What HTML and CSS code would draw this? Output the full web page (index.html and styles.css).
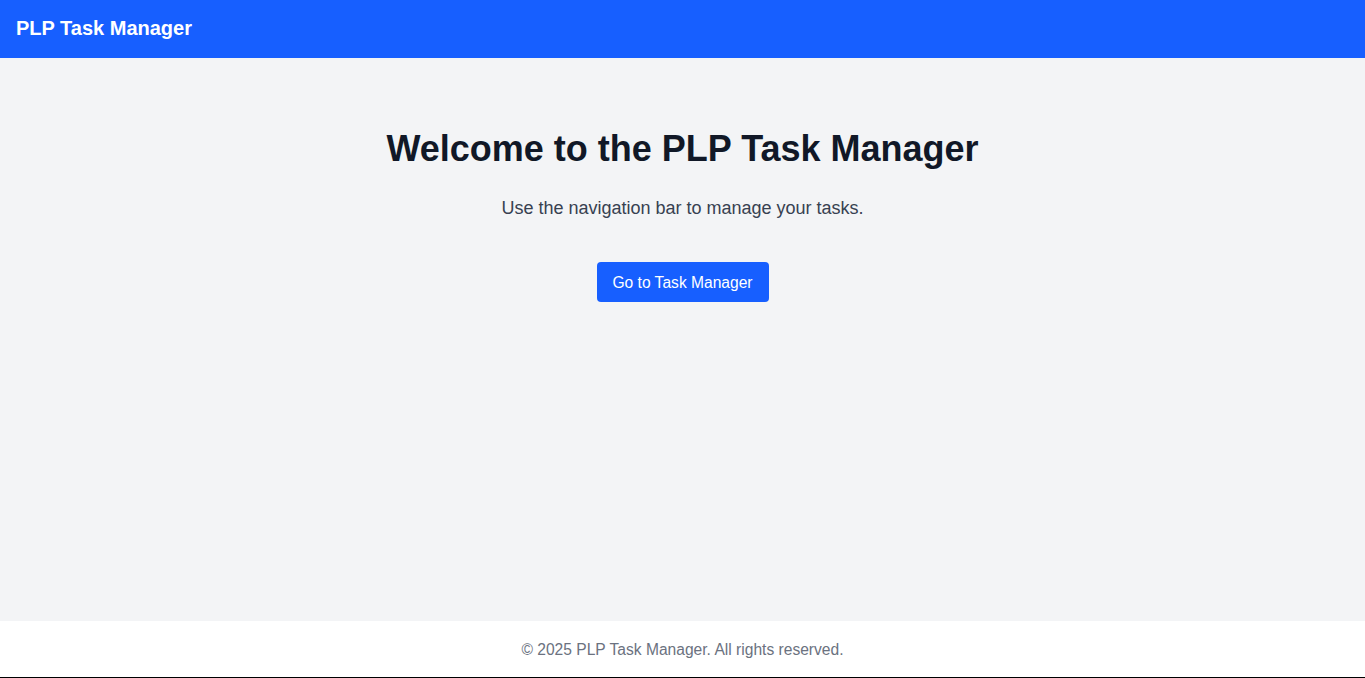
FILE: index.html
```html
<!DOCTYPE html>
<html lang="en">
<head>
<meta charset="utf-8">
<title>PLP Task Manager</title>
<link rel="stylesheet" href="styles.css">
</head>
<body>
<div class="page">
  <header class="navbar">
    <span class="brand">PLP Task Manager</span>
  </header>
  <main class="main">
    <h1 class="title">Welcome to the PLP Task Manager</h1>
    <p class="lead">Use the navigation bar to manage your tasks.</p>
    <button class="btn">Go to Task Manager</button>
  </main>
  <footer class="footer">© 2025 PLP Task Manager. All rights reserved.</footer>
</div>
</body>
</html>
```
FILE: styles.css
```css
html, body {
  margin: 0;
  padding: 0;
  height: 100%;
}
body {
  font-family: "Liberation Sans", Arial, sans-serif;
  background: #f3f4f6;
}
.page {
  display: flex;
  flex-direction: column;
  height: 678px;
}
.navbar {
  height: 58px;
  background: #175fff;
  display: flex;
  align-items: center;
  padding: 0 16px 2px;
  box-sizing: border-box;
  flex-shrink: 0;
}
.brand {
  color: #ffffff;
  font-weight: 700;
  font-size: 20px;
}
.main {
  flex: 1;
  display: flex;
  flex-direction: column;
  align-items: center;
  padding-top: 71px;
}
.title {
  margin: 0;
  font-size: 36px;
  line-height: 40px;
  font-weight: 700;
  color: #111827;
}
.lead {
  margin: 25px 0 0;
  font-size: 18px;
  line-height: 28px;
  color: #374151;
}
.btn {
  margin-top: 40px;
  height: 40px;
  width: 172px;
  padding: 1px 0 0;
  border: none;
  border-radius: 4px;
  background: #175fff;
  color: #ffffff;
  font-family: "Liberation Sans", Arial, sans-serif;
  font-size: 15.6px;
  font-weight: 300;
  cursor: pointer;
}
.footer {
  height: 57px;
  padding-top: 2px;
  box-sizing: border-box;
  background: #ffffff;
  border-bottom: 1px solid #000000;
  display: flex;
  align-items: center;
  justify-content: center;
  color: #6b7280;
  font-size: 15.6px;
  flex-shrink: 0;
}
```
